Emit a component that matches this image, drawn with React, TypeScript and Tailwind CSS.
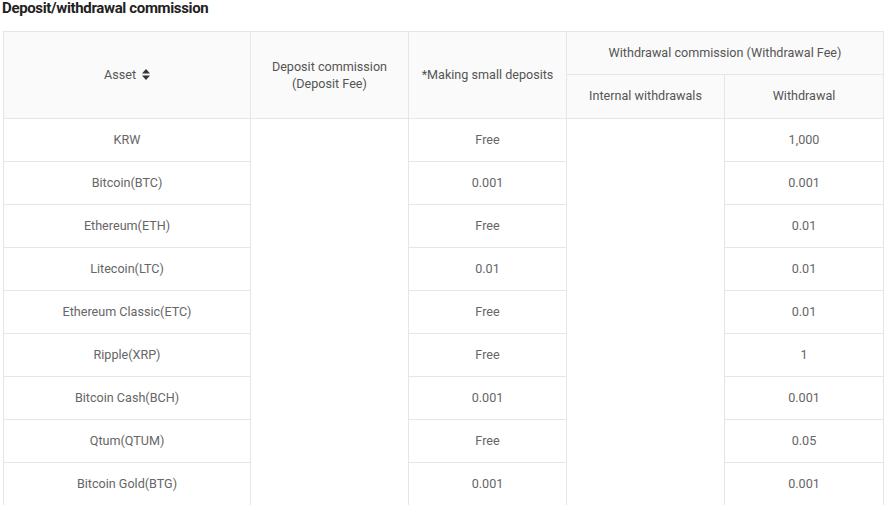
import React from "react";

const rows: [string, string, string][] = [
  ["KRW", "Free", "1,000"],
  ["Bitcoin(BTC)", "0.001", "0.001"],
  ["Ethereum(ETH)", "Free", "0.01"],
  ["Litecoin(LTC)", "0.01", "0.01"],
  ["Ethereum Classic(ETC)", "Free", "0.01"],
  ["Ripple(XRP)", "Free", "1"],
  ["Bitcoin Cash(BCH)", "0.001", "0.001"],
  ["Qtum(QTUM)", "Free", "0.05"],
  ["Bitcoin Gold(BTG)", "0.001", "0.001"],
];

function SortIcon() {
  return (
    <svg width="8" height="11" viewBox="0 0 8 11" className="inline-block ml-[6px] align-[-1px]">
      <path d="M4 0 L8 4.5 L0 4.5 Z" fill="#333" />
      <path d="M0 6.5 L8 6.5 L4 11 Z" fill="#333" />
    </svg>
  );
}

export default function App() {
  const th = "border border-[#e6e6e6] bg-[#fafafa] font-normal text-[12.6px] text-[#555] text-center align-middle";
  const td = "border border-[#e6e6e6] text-[12.6px] text-[#666] text-center align-middle h-[43px]";
  return (
    <div className="w-[886px] h-[505px] overflow-hidden bg-white" style={{ fontFamily: "Roboto, 'Liberation Sans', sans-serif" }}>
      <h2 className="text-[15px] font-bold text-[#222] leading-[16px] tracking-[-0.35px] pl-[2px] pt-0">Deposit/withdrawal commission</h2>
      <table className="table-fixed border-collapse ml-[3px] mt-[15px] w-[880px]">
        <colgroup>
          <col className="w-[247px]" />
          <col className="w-[158px]" />
          <col className="w-[158px]" />
          <col className="w-[158px]" />
          <col className="w-[159px]" />
        </colgroup>
        <thead>
          <tr className="h-[43px]">
            <th rowSpan={2} className={th}>
              Asset
              <SortIcon />
            </th>
            <th rowSpan={2} className={th + " leading-[17px]"}>
              Deposit commission
              <br />
              (Deposit Fee)
            </th>
            <th rowSpan={2} className={th}>
              *Making small deposits
            </th>
            <th colSpan={2} className={th}>
              Withdrawal commission (Withdrawal Fee)
            </th>
          </tr>
          <tr className="h-[44px]">
            <th className={th}>Internal withdrawals</th>
            <th className={th}>Withdrawal</th>
          </tr>
        </thead>
        <tbody>
          {rows.map((r, i) => (
            <tr key={i}>
              <td className={td}>{r[0]}</td>
              {i === 0 && <td rowSpan={rows.length} className={td + " bg-white"} />}
              <td className={td}>{r[1]}</td>
              {i === 0 && <td rowSpan={rows.length} className={td + " bg-white"} />}
              <td className={td}>{r[2]}</td>
            </tr>
          ))}
        </tbody>
      </table>
    </div>
  );
}
